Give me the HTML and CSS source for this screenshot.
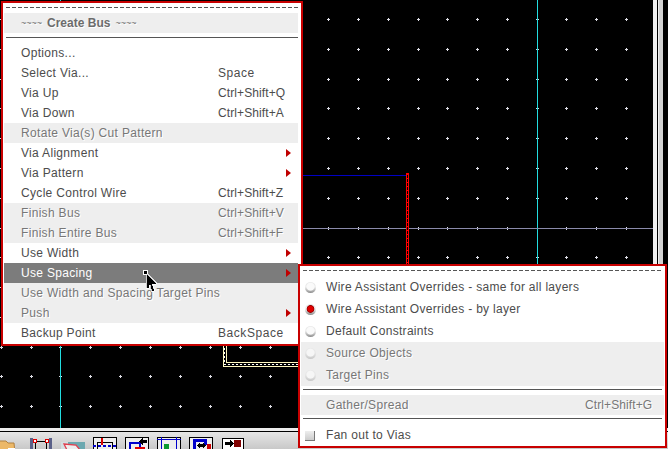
FILE: index.html
```html
<!DOCTYPE html>
<html lang="en">
<head>
<meta charset="utf-8">
<title>Create Bus menu</title>
<link rel="stylesheet" href="styles.css">
</head>
<body>
<div class="app">
  <div class="workspace">
    <div class="canvas">
      <svg class="layout" width="653" height="428" viewBox="0 0 653 428" shape-rendering="crispEdges">
        <defs>
          <path id="d" d="M-1 0h3v1h-3zM0-1h1v3h-1z" fill="#dcdce4"/>
          <g id="row">
            <use href="#d" x="1"/><use href="#d" x="31"/><use href="#d" x="60"/><use href="#d" x="90"/><use href="#d" x="120"/><use href="#d" x="150"/><use href="#d" x="180"/><use href="#d" x="210"/><use href="#d" x="240"/><use href="#d" x="270"/><use href="#d" x="328"/><use href="#d" x="358"/><use href="#d" x="388"/><use href="#d" x="418"/><use href="#d" x="447"/><use href="#d" x="477"/><use href="#d" x="507"/><use href="#d" x="537"/><use href="#d" x="566"/><use href="#d" x="596"/><use href="#d" x="626"/>
          </g>
        </defs>
        <use href="#row" y="19"/><use href="#row" y="49"/><use href="#row" y="79"/><use href="#row" y="108"/><use href="#row" y="138"/><use href="#row" y="168"/><use href="#row" y="198"/><use href="#row" y="228"/><use href="#row" y="257"/><use href="#row" y="287"/><use href="#row" y="317"/><use href="#row" y="347"/><use href="#row" y="376"/><use href="#row" y="406"/>
        <rect x="60" y="0" width="1" height="428" fill="#22dde0"/>
        <rect x="537" y="0" width="1" height="428" fill="#22dde0"/>
        <rect x="300" y="228" width="353" height="1" fill="#8a8aaa"/>
        <rect x="300" y="175" width="106" height="1" fill="#0000c4"/>
        <rect x="406" y="173" width="3" height="92" fill="#ff0000"/>
        <path d="M407.500 175v90" stroke="#000" stroke-dasharray="3 1" fill="none"/>
        <path d="M223.500 340v26.500h76.500M226.500 340v22.500h73.500" stroke="#fff8c0" fill="none"/>
        <path d="M224.500 340v24.500h75.500" stroke="#fff" stroke-width="1" stroke-dasharray="2 2" fill="none"/>
      </svg>
    </div>
    <div class="edge">
      <span class="edge-light"></span><span class="edge-dark"></span><span class="edge-thin"></span><span class="edge-grey"></span>
    </div>
  </div>
  <div class="toolbar">
    <svg class="tool tool-folder" width="16" height="14" viewBox="0 0 16 14">
      <path d="M-1 2h7l2 2h6l1 10H-1z" fill="#ecb868" stroke="#b08040"/>
      <rect x="8" y="9" width="7" height="5" fill="#fff"/>
      <rect x="11" y="11" width="3" height="3" fill="#c00"/>
    </svg>
    <svg class="tool tool-a" width="22" height="17" viewBox="0 0 22 17" shape-rendering="crispEdges">
      <rect width="3" height="17" fill="#5a6088"/>
      <rect x="19" width="3" height="17" fill="#5a6088"/>
      <rect x="5.500" y="3.500" width="11" height="13" fill="none" stroke="#000"/>
      <rect x="3.500" y="1.500" width="3" height="3" fill="#fff" stroke="#d00"/>
      <rect x="15.500" y="1.500" width="3" height="3" fill="#fff" stroke="#d00"/>
      <rect x="3.500" y="13.500" width="3" height="3" fill="#fff" stroke="#d00"/>
      <rect x="15.500" y="13.500" width="3" height="3" fill="#fff" stroke="#d00"/>
    </svg>
    <svg class="tool tool-b" width="24" height="12" viewBox="0 0 24 12">
      <rect width="24" height="12" fill="#6ba8b0"/>
      <rect width="7" height="12" fill="#d4dfe2"/>
      <path d="M3 2l12 1 4 5H6z" fill="#eee" stroke="#e04050" stroke-width="1.300"/>
    </svg>
    <svg class="tool tool-c" width="24" height="17" viewBox="0 0 24 17" shape-rendering="crispEdges">
      <rect x=".5" y=".5" width="23" height="17" fill="#eee" stroke="#000"/>
      <rect x="4.500" y="5.500" width="15" height="12" fill="none" stroke="#000"/>
      <rect x="8" y="1" width="2" height="7" fill="#d00"/>
      <path d="M0 9h24" stroke="#00c" stroke-width="2" stroke-dasharray="3 2"/>
    </svg>
    <svg class="tool tool-c" width="24" height="17" viewBox="0 0 24 17" shape-rendering="crispEdges">
      <rect x=".5" y=".5" width="23" height="17" fill="#eee" stroke="#000"/>
      <path d="M5 17V6h10v4" fill="none" stroke="#00c" stroke-width="2"/>
      <rect x="10" y="10" width="10" height="7" fill="#d00"/>
      <path d="M18 3h4v3h-4v3l-4-4.500 4-4.500z" fill="#000"/>
    </svg>
    <svg class="tool tool-c" width="24" height="17" viewBox="0 0 24 17" shape-rendering="crispEdges">
      <rect x=".5" y=".5" width="23" height="17" fill="#eee" stroke="#000"/>
      <path d="M4.500 0v17M19.500 0v17M0 2.500h24" fill="none" stroke="#00c"/>
      <rect x="7" y="7" width="5" height="10" fill="#0a9a30"/>
    </svg>
    <svg class="tool tool-c" width="24" height="17" viewBox="0 0 24 17" shape-rendering="crispEdges">
      <rect x=".5" y=".5" width="23" height="17" fill="#eee" stroke="#000"/>
      <path d="M5 17V3.500h11V8" fill="none" stroke="#00c" stroke-width="3"/>
      <rect x="18" y="7" width="4" height="10" fill="#c00"/>
      <path d="M11 7h3v-2l3 3.500-3 3.500v-2h-3v2l-3-3.500 3-3.500z" fill="#000"/>
    </svg>
    <svg class="tool tool-d" width="22" height="16" viewBox="0 0 22 16" shape-rendering="crispEdges">
      <rect x=".5" y=".5" width="21" height="16" fill="#fff" stroke="#000"/>
      <path d="M3 4h5V2l4 3.500L8 9V7H3z" fill="#000"/>
      <rect x="12" y="2" width="7" height="7" fill="#800000"/>
    </svg>
  </div>

  <div class="menu menu-main">
    <div class="tear"></div>
    <div class="title"><span class="tilde">~~~~</span><span>Create Bus</span><span class="tilde">~~~~</span></div>
    <div class="sep sep-main"></div>
    <div class="row"><span>Options...</span></div>
    <div class="row"><span>Select Via...</span><span class="word">Space</span></div>
    <div class="row"><span>Via Up</span><span class="key">Ctrl+Shift+Q</span></div>
    <div class="row"><span>Via Down</span><span class="key">Ctrl+Shift+A</span></div>
    <div class="row off"><span>Rotate Via(s) Cut Pattern</span></div>
    <div class="row"><span>Via Alignment</span><span></span><i class="arrow"></i></div>
    <div class="row"><span>Via Pattern</span><span></span><i class="arrow"></i></div>
    <div class="row"><span>Cycle Control Wire</span><span class="key">Ctrl+Shift+Z</span></div>
    <div class="row off"><span>Finish Bus</span><span class="key">Ctrl+Shift+V</span></div>
    <div class="row off"><span>Finish Entire Bus</span><span class="key">Ctrl+Shift+F</span></div>
    <div class="row"><span>Use Width</span><span></span><i class="arrow"></i></div>
    <div class="row active"><span>Use Spacing</span><span></span><i class="arrow"></i></div>
    <div class="row off"><span>Use Width and Spacing Target Pins</span></div>
    <div class="row off"><span>Push</span><span></span><i class="arrow"></i></div>
    <div class="row"><span>Backup Point</span><span class="word">BackSpace</span></div>
  </div>

  <div class="menu menu-sub">
    <div class="tear tear-sub"></div>
    <div class="opt"><i class="radio"></i><span>Wire Assistant Overrides - same for all layers</span></div>
    <div class="opt"><i class="radio on"></i><span>Wire Assistant Overrides - by layer</span></div>
    <div class="opt"><i class="radio"></i><span>Default Constraints</span></div>
    <div class="opt off"><i class="radio dim"></i><span>Source Objects</span></div>
    <div class="opt off"><i class="radio dim"></i><span>Target Pins</span></div>
    <div class="sep sep-sub"></div>
    <div class="opt opt-short off"><span class="opt-label">Gather/Spread</span><span class="key">Ctrl+Shift+G</span></div>
    <div class="sep sep-sub"></div>
    <div class="opt"><i class="check"></i><span>Fan out to Vias</span></div>
  </div>

  <svg class="pointer" width="16" height="22" viewBox="0 0 16 22" shape-rendering="crispEdges">
    <rect x="0" y="0" width="5" height="5" fill="#fff"/>
    <rect x="1" y="1" width="3" height="3" fill="#000"/>
    <path d="M3 4v14h3v-3h1v4h1v2h3v-3h-1v-3h-1v-1h4v-2h-1v-1h-1v-1h-1V9H9V8H8V7H7V6H6V5H5V4z" fill="#000" stroke="#fff" stroke-width=".8"/>
  </svg>
</div>
</body>
</html>
```
FILE: styles.css
```css
* { box-sizing: border-box; }
html, body { margin: 0; padding: 0; }
body {
  width: 668px;
  height: 449px;
  overflow: hidden;
  background: #000;
  font-family: "Liberation Sans", Arial, sans-serif;
  font-size: 12px;
  color: #4c4c4c;
}
.app {
  position: relative;
  width: 668px;
  height: 449px;
  display: flex;
  flex-direction: column;
  overflow: hidden;
}
.workspace { display: flex; height: 428px; }
.canvas { width: 653px; height: 428px; background: #000; }
.layout { display: block; }
.edge { display: flex; flex: 1; }
.edge-light { width: 4px; background: #f0f0f0; }
.edge-dark { width: 1px; background: #000; }
.edge-thin { width: 1px; background: #eee; }
.edge-grey { width: 4px; background: #d2d2d2; }
.toolbar {
  height: 21px;
  border-top: 3px solid #ececec;
  display: flex;
  align-items: flex-start;
  overflow: hidden;
  background: linear-gradient(#000 0 1px, #e6e6e6 1px, #c8c8c8);
  padding-top: 6px;
}
.tool { display: block; flex: none; }
.tool-folder { margin-top: 2px; }
.tool-a { margin-left: 14px; margin-top: 1px; }
.tool-b { margin-left: 9px; margin-top: 5px; }
.tool-c { margin-left: 8px; }
.tool-d { margin-left: 9px; margin-top: 1px; }

.menu {
  position: absolute;
  background: #fff;
  border: 2px solid #c80000;
}
.menu-main {
  left: 1px;
  top: 1px;
  width: 302px;
  height: 345px;
  padding: 4px 3px 0 1px;
}
.menu-sub {
  left: 298px;
  top: 264px;
  width: 369px;
  height: 184px;
  padding: 4px 1px 0;
}
.tear {
  height: 1px;
  margin: 0 0 5px 2px;
  background: repeating-linear-gradient(90deg, #555 0 4px, transparent 4px 6px);
}
.tear-sub { margin: 0 2px 5px; }
.title {
  height: 20px;
  padding-left: 17px;
  display: flex;
  align-items: center;
  gap: 5px;
  background: #eee;
  font-weight: bold;
  color: #6c6c6c;
  text-shadow: 1px 1px 0 #fff;
}
.tilde { font-size: 9px; font-weight: normal; }
.sep { height: 1px; background: #555; }
.sep-main { margin: 4px 0 5px 2px; }
.sep-sub { margin: 3px 2px 5px; }
.row {
  height: 20px;
  line-height: 20px;
  padding-left: 17px;
  display: grid;
  grid-template-columns: 197px 68px auto;
  align-items: center;
  white-space: nowrap;
  letter-spacing: .32px;
}
.key { letter-spacing: .1px; }
.word { letter-spacing: .55px; }
.off { background: #eee; color: #777; text-shadow: 1px 1px 0 #fff; }
.active { background: #7c7c7c; color: #fff; }
.arrow {
  display: block;
  width: 0;
  height: 0;
  border-left: 5px solid #c00000;
  border-top: 4.500px solid transparent;
  border-bottom: 4.500px solid transparent;
}
.opt {
  height: 22px;
  display: flex;
  align-items: center;
  white-space: nowrap;
  letter-spacing: .3px;
}
.opt-short { height: 20px; padding-left: 25px; }
.opt-label { width: 259px; }
.radio {
  flex: none;
  width: 11px;
  height: 11px;
  margin: 0 10px 0 4px;
  border-radius: 50%;
  background:
    radial-gradient(circle at 50% 42%, #fafafa 0 3.500px, transparent 4.500px),
    linear-gradient(#e4e4e4, #f0f0f0 45%, #8c8c8c);
}
.radio.on {
  background:
    radial-gradient(circle at 50% 45%, #e00000 0 2.500px, #900 3.500px, transparent 4.200px),
    linear-gradient(#e4e4e4, #f0f0f0 45%, #8c8c8c);
}
.radio.dim {
  background:
    radial-gradient(circle at 50% 42%, #f6f6f6 0 3.500px, transparent 4.500px),
    linear-gradient(#e8e8e8, #e8e8e8 45%, #c8c8c8);
}
.check {
  flex: none;
  width: 10px;
  height: 10px;
  margin: 1px 11px 0 4px;
  background: linear-gradient(#eee, #ccc);
  border-right: 1px solid #777;
  border-bottom: 1px solid #777;
}
.pointer { position: absolute; left: 143px; top: 270px; }
```
